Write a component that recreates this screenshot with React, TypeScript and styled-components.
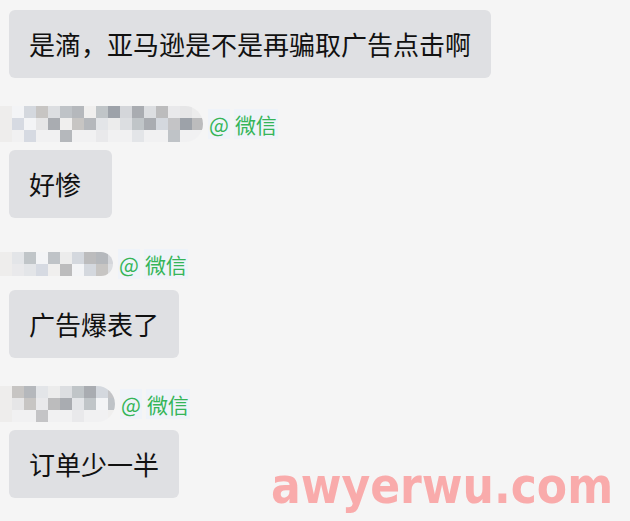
import React from 'react';
import styled, { createGlobalStyle } from 'styled-components';

const GlobalStyle = createGlobalStyle`
  html, body {
    margin: 0;
    padding: 0;
    background: #f5f5f5;
  }
  body {
    font-family: 'Noto Sans CJK SC', 'Noto Sans', sans-serif;
  }
`;

export const Page = styled.div`
  position: relative;
  width: 630px;
  height: 521px;
  overflow: hidden;
  box-sizing: border-box;
  padding: 10px 0 0 9px;
  display: flex;
  flex-direction: column;
  align-items: flex-start;
`;

export const Bubble = styled.div<{ $extra?: number }>`
  box-sizing: border-box;
  height: 68px;
  padding: 0 ${(p) => 20 + (p.$extra || 0)}px 0 20px;
  line-height: 68px;
  font-size: 26px;
  color: #111;
  background: #dfe0e3;
  border-radius: 6px;
  white-space: nowrap;
`;

export const NameRow = styled.div`
  height: 30px;
  margin: 31px 0 11px -9px;
  display: flex;
  align-items: center;
  gap: 5px;
`;

export const Source = styled.span`
  display: flex;
  gap: 4px;
  font-size: 21px;
  line-height: 30px;
  color: #35b558;
`;

export const Tag = styled.span`
  background: #eff3f9;
  padding: 0 1px;
`;

export const Watermark = styled.div`
  position: absolute;
  left: 271px;
  top: 452px;
  font-family: 'DejaVu Sans Condensed', 'DejaVu Sans', sans-serif;
  font-weight: 700;
  font-size: 49px;
  color: #f9abab;
  line-height: 70px;
  white-space: nowrap;
`;

const palette = ['#f0efee', '#d4d8de', '#e3e5e8', '#e6e6e7', '#d4d6da', '#bfc3c7', '#bcbcbd', '#c0c5c8', '#c7c5c3', '#d6dae2', '#c4c4c6', '#ececec', '#a9acb1', '#b5b8bc', '#f3f4f6', '#e9e9eb', '#9da2a9', '#dcdee1'];

function Mosaic({ width, rows, seed }: { width: number; rows: number; seed: number }) {
  const cols = Math.ceil(width / 12);
  const h = rows * 12;
  const cells = [];
  for (let r = 0; r < rows; r++) {
    for (let c = 0; c < cols; c++) {
      const n = (c * 7 + r * 13 + seed * 5 + ((c * c + seed) % 5)) % palette.length;
      let color = palette[n];
      if (r === rows - 1 && rows === 3 && (c + seed) % 3 !== 0) color = '#f1f1f2';
      if (c === 0) color = '#eeedec';
      cells.push(<rect key={`${r}-${c}`} x={c * 12} y={r * 12} width={12} height={12} fill={color} />);
    }
  }
  const id = `clip-${seed}`;
  return (
    <svg width={width} height={h} viewBox={`0 0 ${width} ${h}`}>
      <defs>
        <clipPath id={id}>
          <rect x={-20} y={0} width={width + 20} height={h} rx={h / 2} />
        </clipPath>
      </defs>
      <g clipPath={`url(#${id})`}>{cells}</g>
    </svg>
  );
}

function Name({ width, rows, seed }: { width: number; rows: number; seed: number }) {
  return (
    <NameRow>
      <Mosaic width={width} rows={rows} seed={seed} />
      <Source>
        <Tag>@</Tag>
        <Tag>微信</Tag>
      </Source>
    </NameRow>
  );
}

export default function App() {
  return (
    <>
      <GlobalStyle />
      <Page>
        <Bubble>是滴，亚马逊是不是再骗取广告点击啊</Bubble>
        <Name width={203} rows={3} seed={1} />
        <Bubble $extra={11}>好惨</Bubble>
        <Name width={113} rows={2} seed={2} />
        <Bubble>广告爆表了</Bubble>
        <Name width={115} rows={3} seed={3} />
        <Bubble>订单少一半</Bubble>
        <Watermark>awyerwu.com</Watermark>
      </Page>
    </>
  );
}
